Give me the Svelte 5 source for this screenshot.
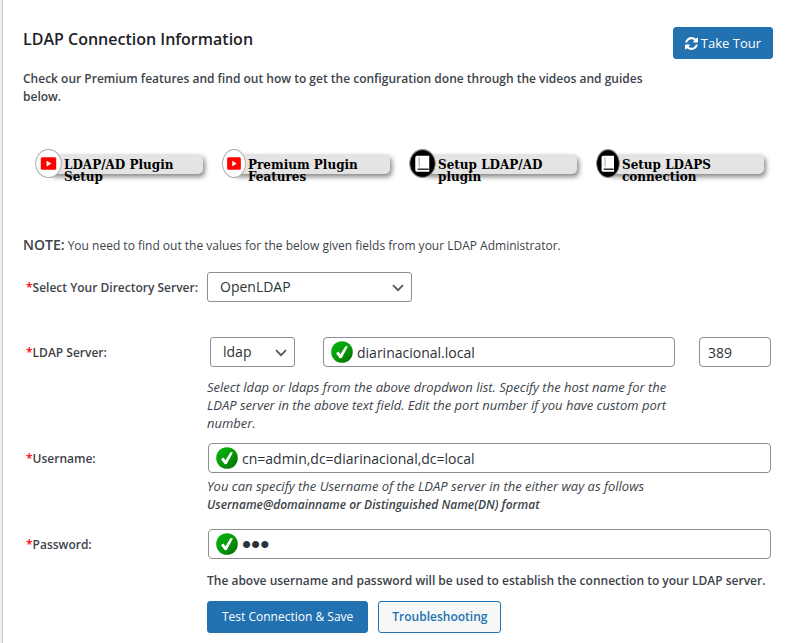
<script>
  const guides = [
    { text: 'LDAP/AD Plugin Setup', icon: 'video', narrow: false },
    { text: 'Premium Plugin Features', icon: 'video', narrow: true },
    { text: 'Setup LDAP/AD plugin', icon: 'book', narrow: false },
    { text: 'Setup LDAPS connection', icon: 'book', narrow: true }
  ];
  let directory = $state('OpenLDAP');
  let protocol = $state('ldap');
  let host = $state('diarinacional.local');
  let port = $state('389');
  let username = $state('cn=admin,dc=diarinacional,dc=local');
  let password = $state('abc');
</script>

{#snippet check()}
  <svg class="check" viewBox="0 0 22 22" aria-hidden="true">
    <defs>
      <linearGradient id="green" x1="0" y1="0" x2="1" y2="1">
        <stop offset="0" stop-color="#00b80a" />
        <stop offset="0.5" stop-color="#079a0b" />
        <stop offset="1" stop-color="#006b05" />
      </linearGradient>
    </defs>
    <circle cx="11" cy="11" r="10.8" fill="url(#green)" />
    <path d="M5 12.2 L7.5 10.6 L9.4 13.2 L14.6 4.9 L16.900 5.6 L10.7 17.1 L8.8 17.2 Z" fill="#fff" />
  </svg>
{/snippet}

{#snippet chevron()}
  <svg class="chevron" viewBox="0 0 12 8" aria-hidden="true">
    <path d="M1 1.2 L6 6.2 L11 1.2" fill="none" stroke="#50575e" stroke-width="1.7" />
  </svg>
{/snippet}

<main>
  <header>
    <h3>LDAP Connection Information</h3>
    <button class="btn primary tour" type="button">
      <svg viewBox="0 0 1536 1536" aria-hidden="true">
        <path fill="currentColor" d="M1511 928q0 5-1 7-64 268-268 434.500T764 1536q-146 0-282.500-55T238 1324l-129 129q-19 19-45 19t-45-19-19-45V960q0-26 19-45t45-19h448q26 0 45 19t19 45-19 45l-137 137q71 66 161 102t187 36q134 0 250-65t186-179q11-17 53-117 8-23 30-23h192q13 0 22.500 9.500t9.500 22.500zm25-800v448q0 26-19 45t-45 19h-448q-26 0-45-19t-19-45 19-45l138-138Q969 256 768 256q-134 0-250 65T332 500q-11 17-53 117-8 23-30 23H50q-13 0-22.500-9.500T18 608v-7q65-268 270-434.500T768 0q146 0 284 55.500T1297 212l130-129q19-19 45-19t45 19 19 45z" />
      </svg>
      Take Tour
    </button>
  </header>

  <p class="intro">Check our Premium features and find out how to get the configuration done through the videos and guides below.</p>

  <nav aria-label="Guides">
    {#each guides as g}
      <a class="guide" href="#guide">
        {#if g.icon === 'video'}
          <svg class="badge" class:narrow={g.narrow} viewBox="0 0 28 28" preserveAspectRatio="none" aria-hidden="true">
            <ellipse cx="14" cy="14" rx="13.3" ry="13.5" fill="#fff" stroke="#aaa" />
            <rect x="6" y="8" width="16" height="12" rx="1.5" fill="#f00" />
            <path d="M12 11.3 L17 14 L12 16.9 Z" fill="#fff" />
          </svg>
        {:else}
          <svg class="badge" class:narrow={g.narrow} viewBox="0 0 28 28" preserveAspectRatio="none" aria-hidden="true">
            <ellipse cx="14" cy="14" rx="13.2" ry="13.4" fill="#000" stroke="#888" />
            <path d="M8.500 6.500 H21 V22 H8 Q6.500 22 6.500 20 V8.500 Q6.500 6.500 8.500 6.500 Z" fill="#fff" />
            <path d="M10.500 8 V17.500" stroke="#999" stroke-width="1" />
            <path d="M9 19.500 H20.500" stroke="#000" stroke-width="1.200" />
          </svg>
        {/if}
        <span>{g.text}</span>
      </a>
    {/each}
  </nav>

  <p class="note"><strong>NOTE:</strong> You need to find out the values for the below given fields from your LDAP Administrator.</p>

  <form onsubmit={(e) => e.preventDefault()}>
    <div class="row directory">
      <label for="directory"><i>*</i>Select Your Directory Server:</label>
      <div class="field">
        <div class="control select wide">
          <select id="directory" bind:value={directory}>
            <option>OpenLDAP</option>
            <option>Microsoft Active Directory</option>
          </select>
          {@render chevron()}
        </div>
      </div>
    </div>

    <div class="row">
      <label for="host"><i>*</i>LDAP Server:</label>
      <div class="field">
        <div class="server">
          <div class="control select short">
            <select aria-label="Protocol" bind:value={protocol}>
              <option>ldap</option>
              <option>ldaps</option>
            </select>
            {@render chevron()}
          </div>
          <div class="control host">
            <input id="host" class="checked" type="text" bind:value={host} />
            {@render check()}
          </div>
          <div class="control port">
            <input aria-label="Port" type="text" bind:value={port} />
          </div>
        </div>
        <p class="help narrowed">Select ldap or ldaps from the above dropdwon list. Specify the host name for the LDAP server in the above text field. Edit the port number if you have custom port number.</p>
      </div>
    </div>

    <div class="row username">
      <label for="username"><i>*</i>Username:</label>
      <div class="field">
        <div class="control full">
          <input id="username" class="checked" type="text" bind:value={username} />
          {@render check()}
        </div>
        <p class="help">You can specify the Username of the LDAP server in the either way as follows<br /><b>Username@domainname or Distinguished Name(DN) format</b></p>
      </div>
    </div>

    <div class="row password">
      <label for="password"><i>*</i>Password:</label>
      <div class="field">
        <div class="control full">
          <input id="password" class="checked" type="password" bind:value={password} />
          {@render check()}
        </div>
        <p class="usage">The above username and password will be used to establish the connection to your LDAP server.</p>
        <div class="actions">
          <button class="btn primary" type="submit">Test Connection &amp; Save</button>
          <button class="btn secondary" type="button">Troubleshooting</button>
        </div>
      </div>
    </div>
  </form>
</main>

<style>
  :global(body) {
    margin: 0;
    background: #f0f0f1;
  }
  * {
    box-sizing: border-box;
  }
  main {
    min-height: 100vh;
    margin-left: 2px;
    padding: 27px 24px 10px 20px;
    border-left: 1px solid #c3c4c7;
    background: #fff;
    color: #3c434a;
    font: 12px/18px 'Open Sans', 'Noto Sans', sans-serif;
  }
  p {
    margin: 0;
  }
  header {
    display: flex;
    justify-content: space-between;
    align-items: flex-start;
  }
  h3 {
    margin: 0;
    color: #1d2327;
    font-size: 16px;
    line-height: 24px;
    font-weight: 600;
  }
  .btn {
    height: 32px;
    padding: 0 13px;
    border: 1px solid #2271b1;
    border-radius: 3px;
    font: inherit;
    white-space: nowrap;
    cursor: pointer;
  }
  .primary {
    padding: 0 14px;
    background: #2271b1;
    color: #fff;
  }
  .secondary {
    background: #f6f7f7;
    color: #2271b1;
    font-weight: 600;
  }
  .tour {
    display: flex;
    align-items: center;
    gap: 3px;
    padding: 0 11px;
    font-size: 13px;
  }
  .tour svg {
    width: 13px;
    height: 13px;
  }
  .intro {
    max-width: 630px;
    margin-top: 11px;
    font-weight: 600;
  }
  nav {
    display: flex;
    gap: 19px;
    margin: 43px 0 0 12px;
  }
  .guide {
    display: flex;
    align-items: center;
    width: 168px;
    height: 29px;
    color: #000;
    font: bold 12px/12px 'DejaVu Serif', serif;
    text-decoration: none;
  }
  .badge {
    position: relative;
    z-index: 1;
    flex: none;
    width: 27px;
    height: 29px;
  }
  .badge.narrow {
    width: 24px;
  }
  .guide span {
    flex: 1;
    height: 20px;
    margin-left: -14px;
    padding: 5px 16px 0 16px;
    border-radius: 5px;
    background: #e4e4e4;
    box-shadow: 2px 3px 5px #888;
  }
  .note {
    margin-top: 58px;
  }
  .note strong {
    font-size: 14px;
    font-weight: 600;
  }
  form {
    margin: 17px 2px 0 3px;
  }
  .row {
    display: flex;
  }
  .row > label {
    flex: none;
    width: 181px;
    line-height: 31px;
    font-weight: 600;
    white-space: nowrap;
  }
  label i {
    color: #f00;
    font-style: normal;
  }
  .field {
    flex: 1;
    min-width: 0;
  }
  .directory {
    margin-bottom: 34px;
  }
  .control {
    position: relative;
    height: 30px;
  }
  .wide {
    width: 205px;
  }
  .short {
    width: 85px;
  }
  .host {
    flex: 1;
    margin: 0 24px 0 28px;
  }
  .port {
    width: 72px;
  }
  .full {
    margin-left: 1px;
  }
  .server {
    display: flex;
    padding-left: 3px;
  }
  input,
  select {
    display: block;
    width: 100%;
    height: 30px;
    margin: 0;
    padding: 0 8px;
    border: 1px solid #8c8f94;
    border-radius: 4px;
    background: #fff;
    color: #2c3338;
    font: 14px/28px 'Open Sans', 'Noto Sans', sans-serif;
  }
  select {
    appearance: none;
    padding: 0 24px 0 12px;
    border-radius: 3px;
  }
  .checked {
    padding-left: 33px;
  }
  input[type='password'] {
    font: 26px/28px 'Liberation Sans', sans-serif;
  }
  .check {
    position: absolute;
    top: 4px;
    left: 8px;
    width: 22px;
    height: 22px;
  }
  .chevron {
    position: absolute;
    top: 12px;
    right: 8px;
    width: 12px;
    height: 8px;
    pointer-events: none;
  }
  .help {
    margin-top: 4px;
    font-size: 13px;
    font-style: italic;
  }
  .narrowed {
    margin-top: 11px;
    max-width: 475px;
  }
  .help b {
    font-size: 12px;
    font-weight: 600;
  }
  .username {
    margin-top: 11px;
  }
  .password {
    margin-top: 15px;
  }
  .usage {
    margin-top: 13px;
    font-weight: 600;
    white-space: nowrap;
  }
  .actions {
    display: flex;
    gap: 10px;
    margin-top: 11px;
  }
</style>
